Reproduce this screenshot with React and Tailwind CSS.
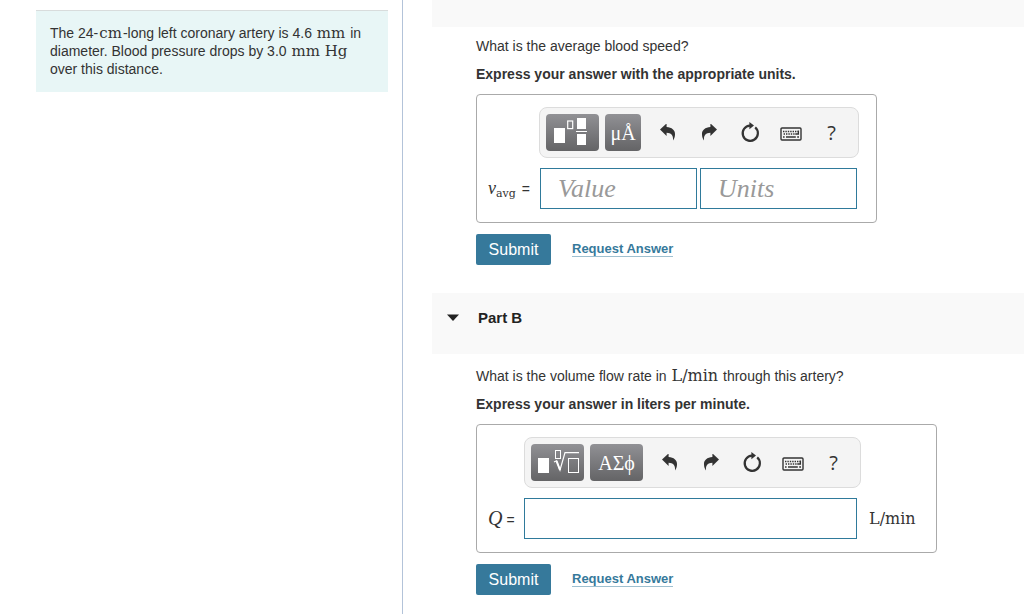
import React from "react";

const UndoIcon = ({ className = "" }) => (
  <svg className={className} width="16" height="18" viewBox="0 0 16 18" fill="currentColor" aria-hidden="true">
    <path d="M0 5.6 L6.6 -0.6 V3 C12 3.4 15.2 6.2 15 10.4 C15 12.8 14.2 14.8 13 16.4 C13.4 11.8 11.6 9 6.6 8.8 V12 Z" />
  </svg>
);

const ResetIcon = () => (
  <svg width="20" height="22" viewBox="0 0 20 22" fill="none" aria-hidden="true">
    <path d="M15.2 5.4 A7.6 7.6 0 1 1 10 3.6" stroke="currentColor" strokeWidth="2.2" />
    <path d="M9.4 0 L14 3.6 L9.4 7.2 Z" fill="currentColor" />
  </svg>
);

const KeyboardIcon = () => (
  <svg width="22" height="16" viewBox="0 0 22 16" fill="none" stroke="currentColor" aria-hidden="true">
    <rect x="1" y="3" width="20" height="12" rx="1" strokeWidth="1.4" />
    <path d="M3 6.5 H18" strokeWidth="1.5" strokeDasharray="1.4 1" />
    <path d="M3.6 9 H16" strokeWidth="1.5" strokeDasharray="1.4 1" />
    <path d="M18.4 5.6 V9 H15.5" strokeWidth="1.3" />
    <path d="M3 12 H4.6 M6 12 H15.8 M17.2 12 H19" strokeWidth="1.5" />
  </svg>
);

const FractionIcon = () => (
  <svg width="53" height="37" viewBox="0 0 53 37" fill="none" aria-hidden="true">
    <rect x="8" y="14" width="11" height="15" fill="white" />
    <rect x="21.7" y="7" width="5" height="7.6" stroke="white" strokeWidth="1.2" />
    <rect x="31" y="4" width="9" height="11" fill="white" />
    <path d="M30 17.5 H41" stroke="white" />
    <rect x="31" y="20" width="9" height="11" fill="white" />
  </svg>
);

const RootIcon = () => (
  <svg width="53" height="37" viewBox="0 0 53 37" fill="none" aria-hidden="true">
    <rect x="7" y="14" width="11" height="15" fill="white" />
    <rect x="24.5" y="6.5" width="5" height="8" stroke="white" />
    <path d="M23 18 L25.5 16.8 L29 26 L34 8.6 H48" stroke="white" strokeWidth="1.2" />
    <path d="M25.5 16.8 L29 26" stroke="white" strokeWidth="2" />
    <rect x="37.5" y="14.5" width="10" height="14" stroke="white" />
  </svg>
);

const PaletteButton = ({ label, className, children }) => (
  <button
    type="button"
    aria-label={label}
    className={`flex h-[37px] shrink-0 items-center justify-center rounded-[4px] bg-linear-to-b from-[#919195] to-[#646466] font-['Liberation_Serif',serif] text-xl text-white ${className}`}
  >
    {children}
  </button>
);

const ToolButton = ({ label, children }) => (
  <button type="button" aria-label={label} className="flex h-9 w-[41px] items-center justify-center">
    {children}
  </button>
);

const Toolbar = ({ children }) => (
  <div className="flex w-fit items-center gap-1.5 rounded-lg border border-[#dcdcdc] bg-[#f4f4f4] p-1.5 text-[#333]">
    {children}
    <div className="flex">
      <ToolButton label="Undo">
        <UndoIcon />
      </ToolButton>
      <ToolButton label="Redo">
        <UndoIcon className="-scale-x-100" />
      </ToolButton>
      <ToolButton label="Reset">
        <ResetIcon />
      </ToolButton>
      <ToolButton label="Keyboard shortcuts">
        <KeyboardIcon />
      </ToolButton>
      <ToolButton label="Help">
        <span className="font-['Open_Sans',sans-serif] text-xl leading-5">?</span>
      </ToolButton>
    </div>
  </div>
);

const MathText = ({ size = "text-[15px]", children }) => (
  <span className={`mx-px font-['DejaVu_Serif',serif] leading-none ${size}`}>{children}</span>
);

const inputClass =
  "h-[41px] min-w-0 border border-[#2f7a9b] bg-white px-[17px] font-['Liberation_Serif',serif] text-[26px] italic placeholder:text-[#999] outline-none";

const Actions = () => (
  <div className="mt-[11px] flex items-center gap-[21px]">
    <button type="submit" className="h-[31px] w-[75px] rounded-[2px] bg-[#36799b] text-base text-white">
      Submit
    </button>
    <a href="#" className="border-b border-[#9fc0d0] text-[13px] leading-[14px] font-bold text-[#36799b]">
      Request Answer
    </a>
  </div>
);

const PartA = () => (
  <form className="pt-[10px] pr-4 pb-7 pl-11">
    <p>What is the average blood speed?</p>
    <p className="mt-[10px] font-bold">Express your answer with the appropriate units.</p>
    <div className="mt-[11px] grid w-fit grid-cols-[51px_auto] items-center gap-y-[10px] rounded-[4px] border border-[#aaa] pt-3 pr-[17px] pb-[13px] pl-[11px]">
      <div className="col-start-2">
        <Toolbar>
          <PaletteButton label="Templates" className="w-[53px]">
            <FractionIcon />
          </PaletteButton>
          <PaletteButton label="Units" className="w-9">
            μÅ
          </PaletteButton>
        </Toolbar>
      </div>
      <label htmlFor="speed" className="flex items-baseline">
        <span className="font-['Liberation_Serif',serif] text-lg leading-none italic">v</span>
        <span className="translate-y-[3px] font-['DejaVu_Serif',serif] text-[11px] leading-none">avg</span>
        <span className="ml-1.5">=</span>
      </label>
      <div className="flex gap-[3px] px-px">
        <input id="speed" type="text" placeholder="Value" className={`w-[157px] ${inputClass}`} />
        <input type="text" aria-label="Units" placeholder="Units" className={`w-[157px] ${inputClass}`} />
      </div>
    </div>
    <Actions />
  </form>
);

const PartB = () => (
  <form className="pt-[13px] pr-4 pb-5 pl-11">
    <p>
      What is the volume flow rate in <MathText size="text-base">L/min</MathText> through this artery?
    </p>
    <p className="mt-[10px] font-bold">Express your answer in liters per minute.</p>
    <div className="mt-[11px] grid w-fit grid-cols-[36px_auto_auto] items-center gap-y-[10px] rounded-[4px] border border-[#aaa] pt-3 pr-5 pb-[13px] pl-[11px]">
      <div className="col-start-2">
        <Toolbar>
          <PaletteButton label="Templates" className="w-[53px]">
            <RootIcon />
          </PaletteButton>
          <PaletteButton label="Greek letters" className="w-[53px]">
            ΑΣϕ
          </PaletteButton>
        </Toolbar>
      </div>
      <label htmlFor="flow" className="col-start-1 flex items-baseline gap-1">
        <span className="font-['Liberation_Serif',serif] text-xl leading-none italic">Q</span>
        <span>=</span>
      </label>
      <input id="flow" type="text" className={`w-[333px] ${inputClass}`} />
      <span className="ml-2 font-['DejaVu_Serif',serif] text-base leading-none">L/min</span>
    </div>
    <Actions />
  </form>
);

const App = () => {
  return (
    <div className="flex min-h-screen bg-white font-['Liberation_Sans',sans-serif] text-sm leading-[18px] text-[#333]">
      <aside className="w-[403px] shrink-0 border-r border-[#b3c3d9] pt-[10px] pr-[14px] pl-9">
        <p className="border-t border-[#d8dcdc] bg-[#e8f6f6] px-[14px] pt-[13px] pb-[14px]">
          The 24-<MathText>cm</MathText>-long left coronary artery is 4.6 <MathText>mm</MathText> in
          diameter. Blood pressure drops by 3.0 <MathText>mm Hg</MathText> over this distance.
        </p>
      </aside>
      <main className="min-w-0 flex-1 pl-[29px]">
        <div className="h-[27px] bg-[#f9f9f9]"></div>
        <PartA />
        <h2 className="bg-[#f9f9f9]">
          <button
            type="button"
            aria-expanded="true"
            className="flex h-[61px] w-full items-center gap-[19px] pb-3 pl-[15px] text-left text-[15px] font-bold text-[#222]"
          >
            <svg width="12" height="7" viewBox="0 0 12 7" fill="currentColor" aria-hidden="true">
              <path d="M0 0.5 H12 L6 7 Z" />
            </svg>
            Part B
          </button>
        </h2>
        <PartB />
      </main>
    </div>
  );
};

export default App;
